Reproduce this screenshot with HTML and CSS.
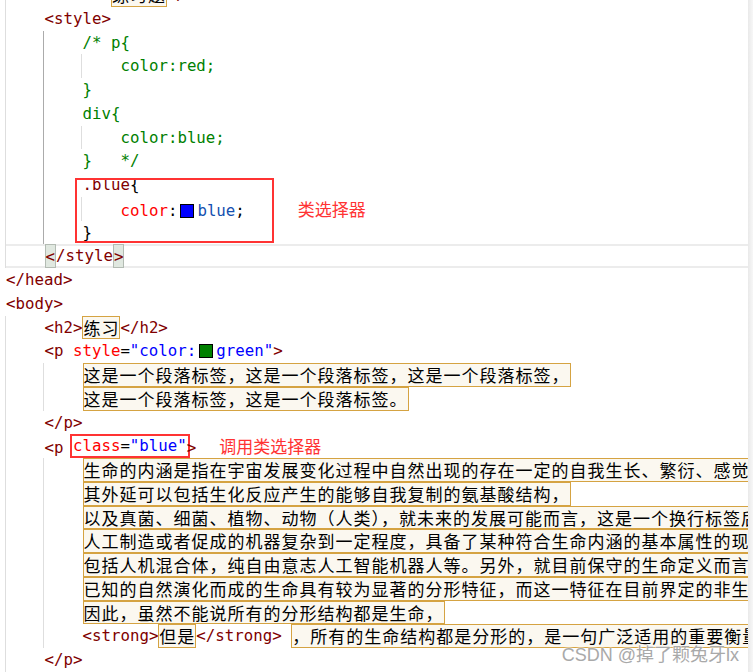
FILE: index.html
```html
<!DOCTYPE html>
<html lang="zh-CN">
<head>
    <meta charset="UTF-8">
    <meta name="viewport" content="width=device-width, initial-scale=1.0">
    <title>类选择器</title>
    <link rel="stylesheet" href="styles.css">
</head>
<body>
    <div class="page">
        <div class="code">
            <div class="block">
                <div class="ln"><span class="tag">&lt;title&gt;</span><span class="txt">练习题</span><span class="tag">&lt;/title&gt;</span></div>
                <div class="ln"><span class="tag">&lt;style&gt;</span></div>
                <div class="block active">
                    <div class="ln"><span class="cm">/* p{</span></div>
                    <div class="block">
                        <div class="ln"><span class="cm">color:red;</span></div>
                    </div>
                    <div class="ln"><span class="cm">}</span></div>
                    <div class="ln"><span class="cm">div{</span></div>
                    <div class="block">
                        <div class="ln"><span class="cm">color:blue;</span></div>
                    </div>
                    <div class="ln"><span class="cm">}   */</span></div>
                    <div class="ln"><span class="sel">.blue</span>{</div>
                    <div class="block">
                        <div class="ln"><span class="prop">color</span>:<span class="swatch sw-blue"></span><span class="val">blue</span>;<span class="note note-1">类选择器</span></div>
                    </div>
                    <div class="ln">}</div>
                </div>
                <div class="ln current"><span class="tag match">&lt;</span><span class="tag">/style</span><span class="tag match">&gt;</span></div>
            </div>
            <div class="ln"><span class="tag">&lt;/head&gt;</span></div>
            <div class="ln"><span class="tag">&lt;body&gt;</span></div>
            <div class="block">
                <div class="ln"><span class="tag">&lt;h2&gt;</span><span class="txt">练习</span><span class="tag">&lt;/h2&gt;</span></div>
                <div class="ln"><span class="tag">&lt;p </span><span class="attr">style</span>=<span class="str">"color:</span><span class="swatch sw-green"></span><span class="str">green"</span><span class="tag">&gt;</span></div>
                <div class="block">
                    <div class="ln"><span class="txt">这是一个段落标签，这是一个段落标签，这是一个段落标签，</span></div>
                    <div class="ln"><span class="txt">这是一个段落标签，这是一个段落标签。</span></div>
                </div>
                <div class="ln"><span class="tag">&lt;/p&gt;</span></div>
                <div class="ln"><span class="tag">&lt;p </span><span class="hl"><span class="attr">class</span>=<span class="str">"blue"</span></span><span class="tag">&gt;</span><span class="note note-2">调用类选择器</span></div>
                <div class="block">
                    <div class="ln"><span class="txt">生命的内涵是指在宇宙发展变化过程中自然出现的存在一定的自我生长、繁衍、感觉、意识、意志</span></div>
                    <div class="ln"><span class="txt">其外延可以包括生化反应产生的能够自我复制的氨基酸结构，</span></div>
                    <div class="ln"><span class="txt">以及真菌、细菌、植物、动物（人类），就未来的发展可能而言，这是一个换行标签后的内容</span></div>
                    <div class="ln"><span class="txt">人工制造或者促成的机器复杂到一定程度，具备了某种符合生命内涵的基本属性的现象，</span></div>
                    <div class="ln"><span class="txt">包括人机混合体，纯自由意志人工智能机器人等。另外，就目前保守的生命定义而言，</span></div>
                    <div class="ln"><span class="txt">已知的自然演化而成的生命具有较为显著的分形特征，而这一特征在目前界定的非生命物质中</span></div>
                    <div class="ln"><span class="txt">因此，虽然不能说所有的分形结构都是生命，</span></div>
                    <div class="ln"><span class="tag">&lt;strong&gt;</span><span class="txt">但是</span><span class="tag">&lt;/strong&gt;</span> <span class="txt">，所有的生命结构都是分形的，是一句广泛适用的重要衡量标准。</span></div>
                </div>
                <div class="ln"><span class="tag">&lt;/p&gt;</span></div>
            </div>
        </div>
        <div class="scroll"></div>

        <div class="mark-box"></div>
        <div class="watermark">CSDN @掉了颗兔牙lx</div>
    </div>
</body>
</html>
```

FILE: styles.css
```css
body {
    margin: 0;
    background: #fff;
}

.page {
    position: relative;
    width: 753px;
    height: 672px;
    overflow: hidden;
    display: flex;
    background: #fff;
}

.code {
    flex: 1;
    overflow: hidden;
    margin-top: -17px;
    padding-left: 5px;
    font-family: "DejaVu Sans Mono", "Liberation Mono", monospace;
    font-size: 15.75px;
    color: #000;
}

.scroll {
    width: 5px;
    background: linear-gradient(to right, #e9e9e9, #f7f7f7);
}

/* one row of the editor */
.ln {
    height: 23.75px;
    line-height: 23.75px;
    white-space: pre;
    padding-left: 38.5px;
}

.code > .ln {
    padding-left: 1px;
}

/* indent guides */
.block {
    border-left: 1px solid #dedede;
}

.block .block {
    margin-left: 37px;
}

.block.active {
    border-left-color: #ababab;
}

.current {
    box-shadow: inset 0 2px #ececec, inset 0 -2px #ececec;
}

/* syntax colours */
.tag {
    color: #800000;
}

.attr {
    color: #ff0000;
}

.str {
    color: #0000ff;
}

.cm {
    color: #008000;
}

.sel {
    color: #800000;
}

.prop {
    color: #ff0000;
}

.val {
    color: #1450b0;
}

.match {
    display: inline-block;
    vertical-align: top;
    height: 23.75px;
    box-sizing: border-box;
    background: #e0e8e0;
    border: 1px solid #b3bbb3;
}

.swatch {
    display: inline-block;
    width: 14px;
    height: 14px;
    box-sizing: border-box;
    margin: 0 3px;
    border: 1px solid #000;
    vertical-align: -2px;
}

.sw-blue {
    background: #0000ff;
}

.sw-green {
    background: #008000;
}

/* plain text runs */
.txt {
    display: inline-block;
    vertical-align: top;
    height: 23.75px;
    box-sizing: border-box;
    border: 1px solid #d5a342;
    background: #fbf8f0;
    font-family: "Noto Sans CJK SC", sans-serif;
    font-size: 17px;
    letter-spacing: 1px;
    line-height: 21px;
    color: #000;
}

/* red annotations */
.hl {
    display: inline-block;
    vertical-align: top;
    height: 23.75px;
    margin: 0 -3px;
    padding: 0 3px;
    outline: 2px solid #f33;
    outline-offset: -2px;
}

.note {
    font-family: "Noto Sans CJK SC", sans-serif;
    font-size: 17px;
    color: #f33;
}

.note-1 {
    margin-left: 53px;
}

.note-2 {
    margin-left: 23px;
}

.mark-box {
    position: absolute;
    left: 75px;
    top: 178px;
    width: 199px;
    height: 65px;
    box-sizing: border-box;
    border: 2px solid #f33;
}

.watermark {
    position: absolute;
    right: 14px;
    bottom: 7px;
    font-family: "Liberation Sans", "Noto Sans CJK SC", sans-serif;
    font-size: 18px;
    line-height: 20px;
    color: #a9a9a9;
    text-shadow: 0 0 2px #fff, 0 0 2px #fff;
}
```
